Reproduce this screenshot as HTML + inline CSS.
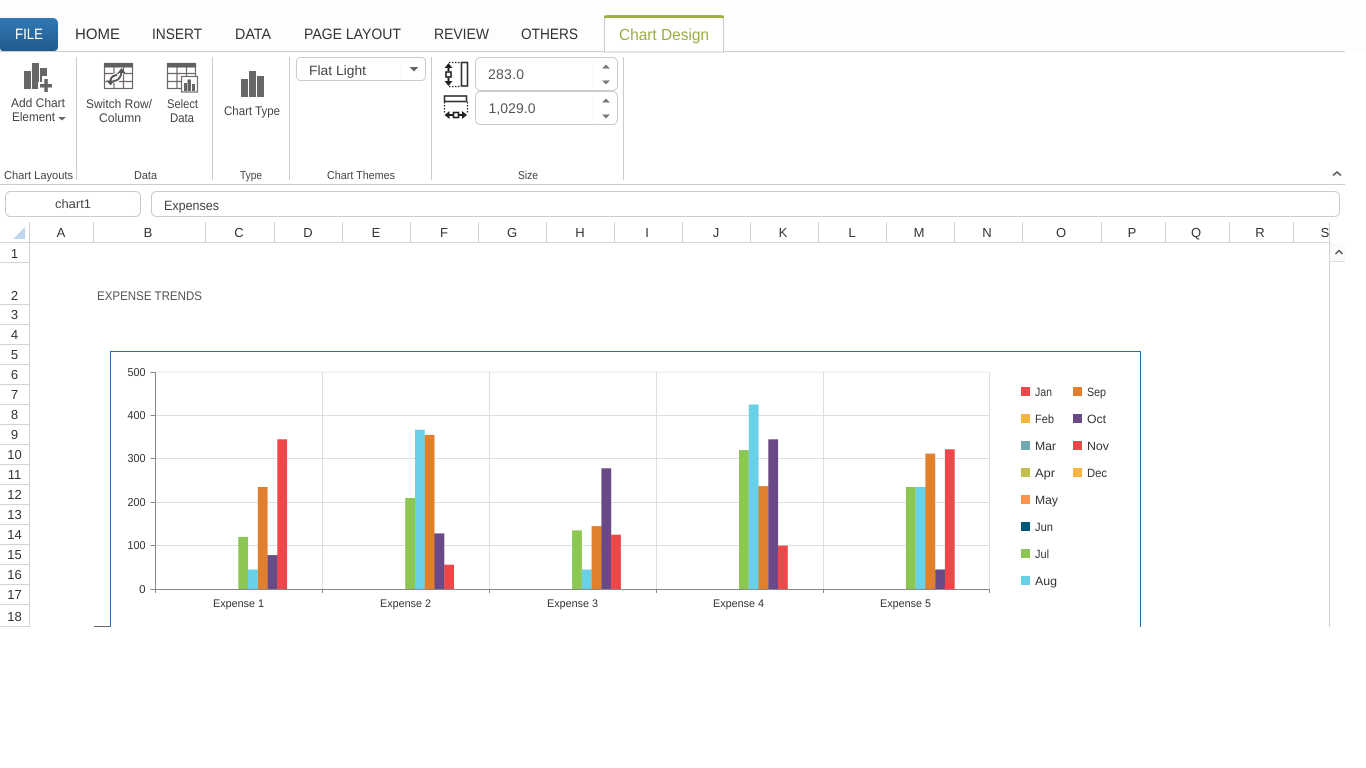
<!DOCTYPE html>
<html>
<head>
<meta charset="utf-8">
<title>Chart Design</title>
<style>
html,body{margin:0;padding:0;background:#fff;width:1366px;height:768px;overflow:hidden}
svg{display:block;position:absolute;left:0;top:0}
text{font-family:"Liberation Sans",sans-serif;fill:#333;text-rendering:geometricPrecision}
.tab{font-size:15px;fill:#333}
.rb{font-size:12.5px;fill:#444}
.gl{font-size:11.5px;fill:#444}
.col text{font-size:13px;text-anchor:middle;fill:#333}
.row text{font-size:13px;text-anchor:middle;fill:#333}
.ya text{font-size:11.5px;text-anchor:end;fill:#333}
.xa text{font-size:11px;fill:#333}
.lg text{font-size:12px;fill:#333}
</style>
</head>
<body>
<svg width="1366" height="768" viewBox="0 0 1366 768" xmlns="http://www.w3.org/2000/svg">
<defs>
<linearGradient id="fb" x1="0" y1="0" x2="0" y2="1"><stop offset="0" stop-color="#3079b5"/><stop offset="1" stop-color="#225a8c"/></linearGradient>
</defs>
<rect x="0" y="0" width="1366" height="51" fill="#fdfdfd"/>
<!-- tabs -->
<line x1="0" y1="51.5" x2="1345" y2="51.5" stroke="#ccc"/>
<path d="M0 18H53a5 5 0 0 1 5 5V47a4 4 0 0 1-4 4H3a3 3 0 0 1-3-3Z" fill="url(#fb)"/>
<text x="15" y="39" class="tab" style="fill:#fff" textLength="28" lengthAdjust="spacingAndGlyphs">FILE</text>
<text x="75" y="39" class="tab" textLength="45" lengthAdjust="spacingAndGlyphs">HOME</text>
<text x="152" y="39" class="tab" textLength="50" lengthAdjust="spacingAndGlyphs">INSERT</text>
<text x="235" y="39" class="tab" textLength="36" lengthAdjust="spacingAndGlyphs">DATA</text>
<text x="304" y="39" class="tab" textLength="97" lengthAdjust="spacingAndGlyphs">PAGE LAYOUT</text>
<text x="434" y="39" class="tab" textLength="55" lengthAdjust="spacingAndGlyphs">REVIEW</text>
<text x="521" y="39" class="tab" textLength="57" lengthAdjust="spacingAndGlyphs">OTHERS</text>
<path d="M604.5 52V20a3 3 0 0 1 3-3H720.5a3 3 0 0 1 3 3V52Z" fill="#fff" stroke="#ccc"/>
<path d="M604 20a4 4 0 0 1 4-5H720a4 4 0 0 1 4 5V18H604Z" fill="#9caf45"/>
<rect x="604" y="15.5" width="120" height="2.5" fill="#9caf45"/>
<text x="619" y="40" style="font-size:16px;fill:#9aae45" textLength="90" lengthAdjust="spacingAndGlyphs">Chart Design</text>

<!-- ribbon separators -->
<g stroke="#ccc">
<line x1="76.5" y1="57" x2="76.5" y2="180"/>
<line x1="212.5" y1="57" x2="212.5" y2="180"/>
<line x1="289.5" y1="57" x2="289.5" y2="180"/>
<line x1="431.5" y1="57" x2="431.5" y2="180"/>
<line x1="623.5" y1="57" x2="623.5" y2="180"/>
<line x1="0" y1="184.5" x2="1345" y2="184.5"/>
</g>

<!-- add chart element icon -->
<g fill="#666">
<rect x="24" y="71" width="7" height="18"/>
<rect x="32" y="63" width="7" height="26"/>
<rect x="40" y="68" width="7" height="21"/>
<path d="M42 76h8v6h3v11H38V82h4Z" fill="#fff"/>
<rect x="40" y="84" width="12" height="3.5"/>
<rect x="44.3" y="79" width="3.5" height="13"/>
</g>
<text x="11" y="107" class="rb" textLength="54" lengthAdjust="spacingAndGlyphs">Add Chart</text>
<text x="12" y="121" class="rb" textLength="43" lengthAdjust="spacingAndGlyphs">Element</text>
<path d="M58 117h8l-4 3.5Z" fill="#666"/>

<!-- switch row/column icon -->
<g fill="none" stroke="#6f6470" stroke-width="1.2">
<rect x="104.5" y="63.5" width="28" height="25"/>
<path d="M104 73.5h29M104 81.500h29M114 67v22M123.500 67v22"/>
</g>
<rect x="104" y="63" width="29" height="4.5" fill="#5f5f5f"/>
<path d="M117 75Q110 76 110.500 83M114 81Q121 80 121.500 71" fill="none" stroke="#fff" stroke-width="4.5"/>
<path d="M117 75Q110 76 110.500 82M114 81Q121 80 121.500 71" fill="none" stroke="#555" stroke-width="2"/>
<path d="M106.500 80.500h8l-4 5ZM117.500 73l4-5 4 5Z" fill="#555"/>

<text x="86" y="108" class="rb" textLength="66" lengthAdjust="spacingAndGlyphs">Switch Row/</text>
<text x="99" y="122" class="rb" textLength="42" lengthAdjust="spacingAndGlyphs">Column</text>

<!-- select data icon -->
<g fill="none" stroke="#6f6470" stroke-width="1.2">
<rect x="167.5" y="63.5" width="28" height="25"/>
<path d="M167 73.5h29M167 81.5h29M177 67v22M186.5 67v22"/>
</g>
<rect x="167" y="63" width="29" height="4.5" fill="#5f5f5f"/>
<rect x="181.5" y="76.5" width="16" height="15.5" fill="#fff" stroke="#6f6f6f" stroke-width="1.2"/>
<g fill="#666">
<rect x="184" y="83" width="3" height="8"/>
<rect x="187.5" y="79.5" width="3.5" height="11.5"/>
<rect x="192" y="84" width="3" height="7"/>
</g>
<text x="167" y="108" class="rb" textLength="31" lengthAdjust="spacingAndGlyphs">Select</text>
<text x="170" y="122" class="rb" textLength="24" lengthAdjust="spacingAndGlyphs">Data</text>

<!-- chart type icon -->
<g fill="#666">
<rect x="241" y="79" width="7" height="18"/>
<rect x="249" y="71" width="7" height="26"/>
<rect x="257" y="76" width="7" height="21"/>
</g>
<text x="224" y="115" class="rb" textLength="56" lengthAdjust="spacingAndGlyphs">Chart Type</text>

<!-- theme dropdown -->
<rect x="296.5" y="57.5" width="129" height="23" rx="4" fill="#fff" stroke="#ccc"/>
<line x1="400.5" y1="58" x2="400.5" y2="80" stroke="#fafafa"/>
<text x="309" y="75" style="font-size:13.5px;fill:#444" textLength="57" lengthAdjust="spacingAndGlyphs">Flat Light</text>
<path d="M409.5 67h9l-4.5 4.5Z" fill="#666"/>

<!-- size icons -->
<g>
<rect x="461.5" y="62.5" width="6" height="23.5" fill="#fff" stroke="#333" stroke-width="1.6"/>
<path d="M449 62.5h12M449 86.5h12" stroke="#222" stroke-width="1.2" stroke-dasharray="1.5 1.5" fill="none"/>
<path d="M448.500 67v4M448.500 82v-4" stroke="#222" stroke-width="2"/>
<path d="M444.500 68l4-5 4 5ZM444.500 81l4 5 4-5Z" fill="#222"/>
<rect x="446" y="72" width="5" height="5" fill="#fff" stroke="#222" stroke-width="1.6"/>
<rect x="444.500" y="96" width="22" height="5.5" fill="#fff" stroke="#333" stroke-width="1.6"/>
<path d="M444.500 102v12M467.500 102v12" stroke="#222" stroke-width="1.2" stroke-dasharray="1.5 1.5" fill="none"/>
<path d="M449 115h4M458 115h4" stroke="#222" stroke-width="2"/>
<path d="M449.500 111l-5 4 5 4ZM462 111l5 4-5 4Z" fill="#222"/>
<rect x="453.500" y="112.500" width="5" height="5" fill="#fff" stroke="#222" stroke-width="1.6"/>
</g>

<!-- spinners -->
<rect x="475.5" y="57.5" width="142" height="33" rx="5" fill="#fff" stroke="#ccc"/>
<rect x="475.5" y="91.5" width="142" height="33" rx="5" fill="#fff" stroke="#ccc"/>
<path d="M592.5 58v32M592.5 92v32" stroke="#fafafa"/>
<text x="488" y="79" style="font-size:14px;fill:#555" textLength="36">283.0</text>
<text x="488.5" y="113" style="font-size:14px;fill:#555" textLength="47">1,029.0</text>
<g fill="#777">
<path d="M602 68.500h8l-4-4Z"/>
<path d="M602 80.500h8l-4 4Z"/>
<path d="M602 102.500h8l-4-4Z"/>
<path d="M602 114.500h8l-4 4Z"/>
</g>

<!-- group labels -->
<text x="4" y="179" class="gl" textLength="69" lengthAdjust="spacingAndGlyphs">Chart Layouts</text>
<text x="134" y="179" class="gl" textLength="23" lengthAdjust="spacingAndGlyphs">Data</text>
<text x="240" y="179" class="gl" textLength="22" lengthAdjust="spacingAndGlyphs">Type</text>
<text x="327" y="179" class="gl" textLength="68" lengthAdjust="spacingAndGlyphs">Chart Themes</text>
<text x="518" y="179" class="gl" textLength="20" lengthAdjust="spacingAndGlyphs">Size</text>
<path d="M1333 175.5l4-3.5 4 3.5" fill="none" stroke="#555" stroke-width="1.5"/>

<!-- formula bar -->
<rect x="5.5" y="191.5" width="135" height="25" rx="5" fill="#fff" stroke="#ccc"/>
<rect x="151.5" y="191.5" width="1188" height="25" rx="5" fill="#fff" stroke="#ccc"/>
<text x="55" y="208" style="font-size:12.5px;fill:#444" textLength="36" lengthAdjust="spacingAndGlyphs">chart1</text>
<text x="164" y="210" style="font-size:13.5px;fill:#444" textLength="55" lengthAdjust="spacingAndGlyphs">Expenses</text>

<!-- column headers -->
<path d="M25 227v12H13Z" fill="#bfd7ee"/>
<g stroke="#d4d4d4">
<path d="M29.5 222V627M93.5 222v21M205.5 222v21M274.5 222v21M342.5 222v21M410.5 222v21M478.5 222v21M546.5 222v21M614.5 222v21M682.5 222v21M750.5 222v21M818.5 222v21M886.5 222v21M954.5 222v21M1022.5 222v21M1101.5 222v21M1165.5 222v21M1229.5 222v21M1293.5 222v21" fill="none"/>
<path d="M1329.5 222V627" fill="none"/>
<path d="M0 242.5H1329" fill="none"/>
<path d="M0 262.5H29M0 304.5H29M0 324.5H29M0 344.5H29M0 364.5H29M0 384.5H29M0 404.5H29M0 424.5H29M0 444.5H29M0 464.5H29M0 484.5H29M0 504.5H29M0 524.5H29M0 544.5H29M0 564.5H29M0 584.5H29M0 604.5H29M0 626.5H29" fill="none"/>
</g>
<g class="col">
<text x="61" y="237">A</text><text x="148" y="237">B</text><text x="239" y="237">C</text><text x="308" y="237">D</text><text x="376" y="237">E</text><text x="444" y="237">F</text><text x="512" y="237">G</text><text x="580" y="237">H</text><text x="647" y="237">I</text><text x="716" y="237">J</text><text x="783" y="237">K</text><text x="852" y="237">L</text><text x="919" y="237">M</text><text x="987" y="237">N</text><text x="1061" y="237">O</text><text x="1132" y="237">P</text><text x="1196" y="237">Q</text><text x="1260" y="237">R</text><text x="1325" y="237">S</text>
</g>
<g class="row">
<text x="14.5" y="258">1</text><text x="14.5" y="300">2</text><text x="14.5" y="319">3</text><text x="14.5" y="339">4</text><text x="14.5" y="359">5</text><text x="14.5" y="379">6</text><text x="14.5" y="399">7</text><text x="14.5" y="419">8</text><text x="14.5" y="439">9</text><text x="14.5" y="459">10</text><text x="14.5" y="479">11</text><text x="14.5" y="499">12</text><text x="14.5" y="519">13</text><text x="14.5" y="539">14</text><text x="14.5" y="559">15</text><text x="14.5" y="579">16</text><text x="14.5" y="599">17</text><text x="14.5" y="621">18</text>
</g>

<!-- scrollbar top -->
<rect x="1330" y="243" width="15" height="18" fill="#fafafa"/>
<line x1="1330" y1="261.5" x2="1345" y2="261.5" stroke="#ddd"/>
<path d="M1335.5 254l3.5-3.5 3.5 3.5" fill="none" stroke="#555" stroke-width="1.5"/>

<text x="97" y="300" style="font-size:12.5px;fill:#555" textLength="105" lengthAdjust="spacingAndGlyphs">EXPENSE TRENDS</text>

<!-- chart frame -->
<path d="M110.5 627V351.5H1140.5V627" fill="#fff" stroke="#2f6ea5"/>
<line x1="94" y1="626.5" x2="110" y2="626.5" stroke="#666"/>

<!-- gridlines -->
<rect x="156" y="371.5" width="834" height="1.5" fill="#f3f3f3"/>
<g stroke="#dedede" fill="none">
<path d="M156 415.5H990M156 458.5H990M156 502.5H990M156 545.5H990"/>
<path d="M322.5 372V589M489.5 372V589M656.5 372V589M823.5 372V589M989.5 372V589"/>
</g>

<!-- bars -->
<g fill="#8cc754">
<rect x="238.3" y="536.9" width="9.8" height="52.1"/>
<rect x="405.2" y="497.9" width="9.8" height="91.1"/>
<rect x="572.1" y="530.4" width="9.8" height="58.6"/>
<rect x="739" y="450.1" width="9.8" height="138.9"/>
<rect x="905.9" y="487" width="9.8" height="102"/>
</g>
<g fill="#68d1e8">
<rect x="248" y="569.5" width="9.8" height="19.5"/>
<rect x="415" y="429.7" width="9.8" height="159.3"/>
<rect x="581.9" y="569.5" width="9.8" height="19.5"/>
<rect x="748.8" y="404.5" width="9.8" height="184.5"/>
<rect x="915.7" y="487" width="9.8" height="102"/>
</g>
<g fill="#e17f2c">
<rect x="257.8" y="487" width="9.8" height="102"/>
<rect x="424.7" y="434.9" width="9.8" height="154.1"/>
<rect x="591.6" y="526.1" width="9.8" height="62.9"/>
<rect x="758.5" y="486.1" width="9.8" height="102.9"/>
<rect x="925.4" y="453.6" width="9.8" height="135.4"/>
</g>
<g fill="#6a4a86">
<rect x="267.6" y="555.1" width="9.8" height="33.9"/>
<rect x="434.5" y="533.4" width="9.8" height="55.6"/>
<rect x="601.4" y="468.3" width="9.8" height="120.7"/>
<rect x="768.3" y="439.3" width="9.8" height="149.7"/>
<rect x="935.2" y="569.5" width="9.8" height="19.5"/>
</g>
<g fill="#ec4749">
<rect x="277.3" y="439.3" width="9.8" height="149.7"/>
<rect x="444.2" y="564.7" width="9.8" height="24.3"/>
<rect x="611.1" y="534.7" width="9.8" height="54.3"/>
<rect x="778" y="545.6" width="9.8" height="43.4"/>
<rect x="944.9" y="449.3" width="9.8" height="139.7"/>
</g>

<!-- axes -->
<g stroke="#888" fill="none">
<path d="M155.5 372V593M150.5 372.5H155M150.5 415.5H155M150.5 458.5H155M150.5 502.5H155M150.5 545.5H155"/>
<path d="M150.5 589.5H990M322.5 589v4M489.5 589v4M656.5 589v4M823.5 589v4M989.5 589v4"/>
</g>
<g class="ya">
<text x="145.5" y="376" textLength="18" lengthAdjust="spacingAndGlyphs">500</text><text x="145.5" y="419" textLength="18" lengthAdjust="spacingAndGlyphs">400</text><text x="145.5" y="462" textLength="18" lengthAdjust="spacingAndGlyphs">300</text><text x="145.5" y="506" textLength="18" lengthAdjust="spacingAndGlyphs">200</text><text x="145.5" y="549" textLength="18" lengthAdjust="spacingAndGlyphs">100</text><text x="145.5" y="593">0</text>
</g>
<g class="xa">
<text x="213" y="607" textLength="51" lengthAdjust="spacingAndGlyphs">Expense 1</text>
<text x="380" y="607" textLength="51" lengthAdjust="spacingAndGlyphs">Expense 2</text>
<text x="547" y="607" textLength="51" lengthAdjust="spacingAndGlyphs">Expense 3</text>
<text x="713" y="607" textLength="51" lengthAdjust="spacingAndGlyphs">Expense 4</text>
<text x="880" y="607" textLength="51" lengthAdjust="spacingAndGlyphs">Expense 5</text>
</g>

<!-- legend -->
<g>
<rect x="1021" y="387" width="9" height="9" fill="#ec4749"/>
<rect x="1021" y="414" width="9" height="9" fill="#f7b43f"/>
<rect x="1021" y="441" width="9" height="9" fill="#70a8b0"/>
<rect x="1021" y="468" width="9" height="9" fill="#c0c04a"/>
<rect x="1021" y="495" width="9" height="9" fill="#fb9450"/>
<rect x="1021" y="522" width="9" height="9" fill="#00577a"/>
<rect x="1021" y="549" width="9" height="9" fill="#8cc754"/>
<rect x="1021" y="576" width="9" height="9" fill="#68d1e8"/>
<rect x="1073" y="387" width="9" height="9" fill="#e17f2c"/>
<rect x="1073" y="414" width="9" height="9" fill="#6a4a86"/>
<rect x="1073" y="441" width="9" height="9" fill="#ec4749"/>
<rect x="1073" y="468" width="9" height="9" fill="#f7b43f"/>
</g>
<g class="lg">
<text x="1035" y="396" textLength="17" lengthAdjust="spacingAndGlyphs">Jan</text>
<text x="1035" y="423" textLength="19" lengthAdjust="spacingAndGlyphs">Feb</text>
<text x="1035" y="450" textLength="21" lengthAdjust="spacingAndGlyphs">Mar</text>
<text x="1035" y="477" textLength="20" lengthAdjust="spacingAndGlyphs">Apr</text>
<text x="1035" y="504" textLength="23" lengthAdjust="spacingAndGlyphs">May</text>
<text x="1035" y="531" textLength="18" lengthAdjust="spacingAndGlyphs">Jun</text>
<text x="1035" y="558" textLength="14" lengthAdjust="spacingAndGlyphs">Jul</text>
<text x="1035" y="585" textLength="22" lengthAdjust="spacingAndGlyphs">Aug</text>
<text x="1087" y="396" textLength="19" lengthAdjust="spacingAndGlyphs">Sep</text>
<text x="1087" y="423" textLength="19" lengthAdjust="spacingAndGlyphs">Oct</text>
<text x="1087" y="450" textLength="22" lengthAdjust="spacingAndGlyphs">Nov</text>
<text x="1087" y="477" textLength="20" lengthAdjust="spacingAndGlyphs">Dec</text>
</g>
</svg>
</body>
</html>
